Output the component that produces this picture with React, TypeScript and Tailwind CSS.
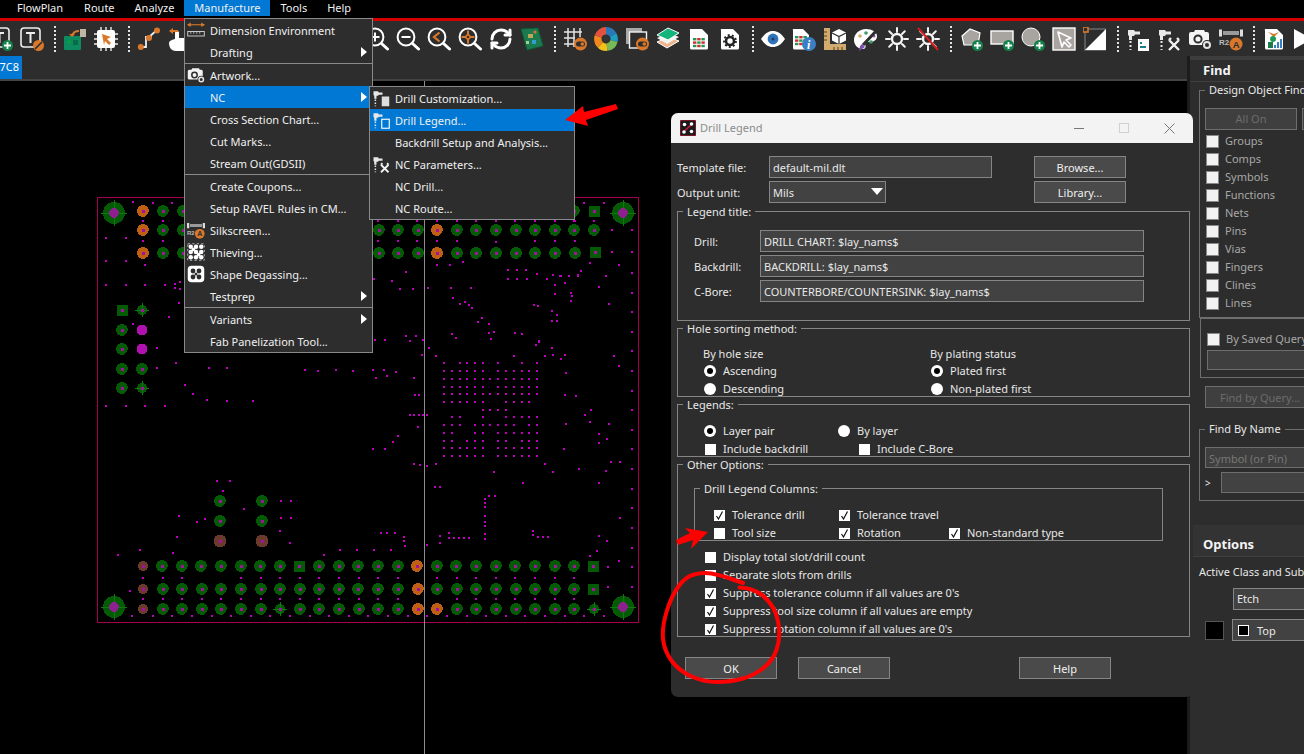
import React from "react";
import { RefreshCw } from "lucide-react";

const FONT = "font-['Noto_Sans',_'Open_Sans',_sans-serif]";

// ---- toolbar / menu icons ----
const Ic = ({ size = 24, children }: { size?: number; children: React.ReactNode }) => (
  <svg width={size} height={size} viewBox="0 0 24 24" className="shrink-0">
    {children}
  </svg>
);

const PlusBadge = () => (
  <g>
    <circle cx="18.5" cy="18.5" r="5.5" fill="#14804a" />
    <path d="M18.5 15v7M15 18.5h7" stroke="#fff" strokeWidth="1.8" />
  </g>
);

const Doc = ({ x = 3, w = 18 }: { x?: number; w?: number }) => (
  <path d={`M${x} 2h${w - 6}l6 6v13a1.5 1.5 0 0 1-1.5 1.5h-${w - 3}a1.5 1.5 0 0 1-1.5-1.5V3.5A1.5 1.5 0 0 1 ${x} 2z`} fill="#fff" />
);

const Cells = ({ x = 6, y = 11 }: { x?: number; y?: number }) => (
  <g>
    {[0, 1, 2].map((r) =>
      [0, 1, 2].map((c) => (
        <rect key={`${r}${c}`} x={x + c * 4.2} y={y + r * 3.4} width="3.4" height="2.4" fill={(r + c) % 2 ? "#d92b2b" : "#1f9a55"} />
      ))
    )}
  </g>
);

const Drill = () => (
  <g>
    <path d="M2 3h6l1 1.5h5v3H9L8 9H6v4H3V9L2 8z" fill="#e8e8e8" />
    <path d="M4.5 14v2M4.5 18v2M4.5 22v1" stroke="#e8e8e8" strokeWidth="2" />
  </g>
);

const Wrench = () => (
  <path d="M12 13l10 10M22 13l-10 10M12 13l2-2M22 13l-2-2" stroke="#f2f2f2" strokeWidth="2.4" fill="none" />
);

const Camera = () => (
  <g>
    <path d="M1 7a2 2 0 0 1 2-2h3l1-2h9l1 2h2a2 2 0 0 1 2 2v11H3a2 2 0 0 1-2-2z" fill="#f4f4f4" />
    <circle cx="10" cy="12" r="3.6" fill="#f4f4f4" stroke="#2d2d2d" strokeWidth="2" />
    <circle cx="19" cy="18" r="5" fill="#2d2d2d" />
    <circle cx="19" cy="18" r="3" fill="none" stroke="#e4e4e4" strokeWidth="2" />
  </g>
);

const R2A = () => (
  <g>
    <rect x="4" y="4" width="16" height="4" fill="#9a9a9a" />
    <path d="M1.5 2.5v7M22.5 2.5v7" stroke="#ddd" strokeWidth="3" />
    <text x="0" y="18" fontSize="8" fontWeight="700" fill="#bbb" fontFamily="Liberation Sans">R2</text>
    <circle cx="17" cy="17" r="6.5" fill="#d9782b" />
    <text x="13.8" y="20.5" fontSize="9.5" fontWeight="700" fill="#2d2d2d" fontFamily="Liberation Sans">A</text>
  </g>
);

const Magnifier = ({ children }: { children?: React.ReactNode }) => (
  <g>
    <circle cx="10" cy="10" r="8.4" fill="none" stroke="#fff" strokeWidth="2" />
    <path d="M16.5 16.5l6 5.5" stroke="#fff" strokeWidth="3" strokeLinecap="round" />
    {children}
  </g>
);

const Sun = () => (
  <g fill="none" stroke="#f4f4f4">
    <circle cx="12" cy="12" r="5" strokeWidth="2.4" />
    <path d="M12 1v4M12 19v4M1 12h4M19 12h4M4.2 4.2l2.8 2.8M17 17l2.8 2.8M19.8 4.2L17 7M7 17l-2.8 2.8" strokeWidth="2" strokeLinecap="round" />
  </g>
);

const Toggle = () => (
  <g>
    <circle cx="17.5" cy="17" r="6.5" fill="#d9782b" />
    <rect x="13" y="14.5" width="9" height="5" rx="2.5" fill="#2d2d2d" />
    <circle cx="19.3" cy="17" r="1.8" fill="#d9782b" />
  </g>
);

const wheel = [
  { c: "#2b78b8", o: 0, l: 17 },
  { c: "#1f9ec2", o: 17, l: 12 },
  { c: "#79b956", o: 29, l: 19 },
  { c: "#f2c21a", o: 48, l: 14 },
  { c: "#f0881e", o: 62, l: 18 },
  { c: "#e6503f", o: 80, l: 20 },
];

const toolbarIcons: React.ReactNode[] = [
  <Ic key="t1"><rect x="1" y="1" width="19" height="19" rx="3" fill="none" stroke="#eee" strokeWidth="1.6" /><path d="M6 6h9M10.5 6v10" stroke="#eee" strokeWidth="2" /><PlusBadge /></Ic>,
  <Ic key="t2"><rect x="1" y="1" width="19" height="19" rx="3" fill="none" stroke="#eee" strokeWidth="1.6" /><path d="M6 6h9M10.5 6v10" stroke="#eee" strokeWidth="2" /><circle cx="18.5" cy="18.5" r="5.5" fill="#d9782b" /><path d="M15 22l7-7" stroke="#2d2d2d" strokeWidth="1.6" /></Ic>,
  "sep",
  <Ic key="b1"><rect x="1" y="9" width="17" height="14" rx="1" fill="#0e8a5f" /><circle cx="6" cy="15" r="1.4" fill="#0a3" /><rect x="10" y="13" width="5" height="5" fill="#086b49" /><rect x="17" y="2" width="6" height="8" fill="#bdb7a8" /><path d="M16 4c-4 0-6 1-7 5" stroke="#d9782b" strokeWidth="2" fill="none" /><path d="M6 7l3 3 3-3" fill="#d9782b" /></Ic>,
  <Ic key="b2"><path d="M7 0v24M12 0v24M17 0v24M0 7h24M0 12h24M0 17h24" stroke="#eee" strokeWidth="1.4" /><rect x="3" y="3" width="18" height="18" rx="2" fill="#fff" /><path d="M8 7l9 3-4 2 4 4-2 2-4-4-1 4z" fill="#d9782b" /></Ic>,
  "sep",
  <Ic key="r1"><path d="M4 20h5V10h6" stroke="#eee" strokeWidth="1.8" fill="none" /><path d="M12 10l8-7" stroke="#eee" strokeWidth="1.8" /><circle cx="3.8" cy="20" r="3" fill="#d9782b" /><circle cx="12" cy="11" r="3" fill="#d9782b" /><circle cx="20" cy="3.5" r="3" fill="#d9782b" /></Ic>,
  <Ic key="r2"><path d="M8 24c-4 0-7-3-7-8 0-2 2-3 6-4V6c0-3 4-3 4 0v5h6v13z" fill="#fff" /><path d="M1 4l4-3v2h5v2H5v2z" fill="#d9782b" /></Ic>,
  <div key="gap" className="w-[159px] shrink-0" />,
  <Ic key="z1"><Magnifier><path d="M5.5 10h9M10 5.5v9" stroke="#fff" strokeWidth="2" /></Magnifier></Ic>,
  <Ic key="z2"><Magnifier><path d="M5.5 10h9" stroke="#fff" strokeWidth="2" /></Magnifier></Ic>,
  <Ic key="z3"><Magnifier><path d="M12.5 5.5L7 10l5.5 4.5" stroke="#d9782b" strokeWidth="2.2" fill="none" /></Magnifier></Ic>,
  <Ic key="z4"><Magnifier><path d="M10 3.5v13M3.5 10h13" stroke="#d9782b" strokeWidth="2" /><circle cx="10" cy="10" r="2" fill="#2d2d2d" stroke="#d9782b" strokeWidth="1.4" /></Magnifier></Ic>,
  <RefreshCw key="z5" size={24} strokeWidth={3} color="#fff" className="shrink-0" />,
  <Ic key="z6"><path d="M1 2l17-1 5 18-16 4z" fill="#1c7a4e" stroke="#0f5a37" /><rect x="8" y="7" width="5" height="4" fill="#b9a85a" /><rect x="12" y="13" width="4" height="4" fill="#2f9fd0" /><rect x="6" y="14" width="3" height="3" fill="#9fd08a" /><circle cx="15" cy="5" r="1.6" fill="#d9782b" /></Ic>,
  "sep",
  <Ic key="g1"><path d="M5 1v19M11 1v19M17 1v9M1 5h18M1 11h11M1 17h11" stroke="#e4e4e4" strokeWidth="1.5" /><Toggle /></Ic>,
  <Ic key="g2"><g transform="rotate(-90 12 12)">{wheel.map((s) => (<circle key={s.c} cx="12" cy="12" r="8.2" fill="none" stroke={s.c} strokeWidth="7.4" pathLength={100} strokeDasharray={`${s.l} ${100 - s.l}`} strokeDashoffset={-s.o} />))}</g><circle cx="12" cy="12" r="3.6" fill="#333" /></Ic>,
  <Ic key="g3"><rect x="1" y="1" width="16" height="16" fill="#a8a8a8" /><rect x="4.5" y="5" width="17" height="16" fill="#2d2d2d" stroke="#f2f2f2" strokeWidth="1.4" /><Toggle /></Ic>,
  <Ic key="g4"><path d="M1 15l12-5 10 4-12 7z" fill="#efb48a" stroke="#fff" /><path d="M1 11l12-5 10 4-12 7z" fill="#f4f4f4" /><path d="M1 8l11-7 11 5-11 7z" fill="#12b57a" stroke="#fff" /></Ic>,
  <Ic key="g5"><Doc /><Cells /></Ic>,
  <Ic key="g6"><Doc /><circle cx="12" cy="14" r="4" fill="none" stroke="#222" strokeWidth="2.6" /><circle cx="12" cy="14" r="6" fill="none" stroke="#222" strokeWidth="1.8" strokeDasharray="2 2.2" /></Ic>,
  "sep",
  <Ic key="v1"><path d="M0 12c4-6 8-8 12-8s8 2 12 8c-4 6-8 8-12 8s-8-2-12-8z" fill="#fff" /><circle cx="12" cy="12" r="5.4" fill="#2f74b8" /><circle cx="12" cy="12" r="1.6" fill="#1b3f6a" /></Ic>,
  <Ic key="v2"><Doc x={1} w={16} /><Cells x={3} y={9} /><circle cx="17" cy="17" r="7" fill="#3a7fc4" /><text x="15" y="21.5" fontSize="12" fontStyle="italic" fontWeight="700" fill="#fff" fontFamily="Liberation Serif">i</text></Ic>,
  <Ic key="v3"><path d="M1 1h6v16h16v6H1z" fill="#d4ab6e" /><path d="M1 5h3M1 9h3M1 13h3M11 23v-3M15 23v-3M19 23v-3" stroke="#5a4020" strokeWidth="1" /><path d="M16 2l7 3.5v8L16 17l-7-3.5v-8z" fill="#fff" /><path d="M9 6l7 3.5L23 6M16 9.500V17" stroke="#2d2d2d" strokeWidth="1.2" fill="none" /></Ic>,
  <Ic key="v4"><path d="M12 2C5 2 0 7 0 13c0 5 4 9 9 9 3 0 3-3 2-5 0-2 2-2 4-2 5 0 8-2 8-6 0-4-5-7-11-7z" fill="#fff" /><circle cx="12" cy="6" r="1.8" fill="#3d9a6a" /><circle cx="6" cy="9" r="1.8" fill="#d4ab6e" /><circle cx="17" cy="15" r="1.8" fill="#3d9a6a" /><circle cx="20" cy="9" r="1.5" fill="#9560b8" /><path d="M24 2L9 18" stroke="#2d2d2d" strokeWidth="3" /><path d="M8 17l3 3-6 4 1-5z" fill="#7b4fb0" /></Ic>,
  <Ic key="v5"><Sun /></Ic>,
  <Ic key="v6"><Sun /><path d="M2 1l20 22" stroke="#d41c1c" strokeWidth="2" /></Ic>,
  "sep",
  <Ic key="d1"><path d="M3 9l8-7 10 4-2 12H5z" fill="#a8a4a0" stroke="#fff" strokeWidth="1.2" /><PlusBadge /></Ic>,
  <Ic key="d2"><rect x="1" y="4" width="22" height="13" fill="#a8a4a0" stroke="#fff" strokeWidth="1.4" /><PlusBadge /></Ic>,
  <Ic key="d3"><circle cx="10" cy="10" r="9" fill="#a8a4a0" stroke="#fff" strokeWidth="1" /><PlusBadge /></Ic>,
  <Ic key="d4"><rect x="1" y="1" width="22" height="22" fill="#a8a4a0" stroke="#fff" strokeWidth="1.4" /><path d="M6 5l13 6-5 2 5 5-2 2-5-5-2 5z" fill="#a8a4a0" stroke="#fff" strokeWidth="1.6" strokeLinejoin="round" /></Ic>,
  <Ic key="d5"><rect x="2" y="2" width="20" height="21" fill="none" stroke="#666" strokeWidth="1.6" /><path d="M23 2v21H2z" fill="#fff" /><rect x="0" y="0" width="5" height="5" fill="#2d2d2d" stroke="#d9782b" strokeWidth="1.6" /></Ic>,
  "sep",
  <Ic key="n1"><Drill /><rect x="12" y="12" width="11" height="12" fill="#fff" /><rect x="14" y="15" width="2" height="2" fill="#1c7a8a" /><rect x="14" y="19" width="6" height="2" fill="#1c7a8a" /></Ic>,
  <Ic key="n2"><Drill /><Wrench /></Ic>,
  <Ic key="n3"><Camera /></Ic>,
  <Ic key="n4"><R2A /></Ic>,
  "sep",
  <Ic key="p1"><Doc /><path d="M6 5l6 2 5-2-5 5z" fill="#d9782b" /><circle cx="11" cy="12" r="3" fill="#1f9a55" /><rect x="6" y="15" width="5" height="6" fill="#1f7a4a" /><path d="M13 21v-3M16 21v-6M19 21v-9" stroke="#3a7fc4" strokeWidth="2" /></Ic>,
  <Ic key="p2"><path d="M1 2l18 10L1 22z" fill="#fff" /><path d="M14 20l4-4 3 3" stroke="#d9782b" strokeWidth="2" fill="none" /></Ic>,
];

// ---- board drawing data (screen coordinates) ----
type P = [number, number];
const row = (y: number, xs: number[]): P[] => xs.map((x) => [x, y]);
const zoomed = (ox: number, oy: number, pts: number[][]): P[] => pts.map(([x, y]) => [ox + x / 3, oy + y / 3]);

const greenPads: P[] = [
  ...row(211, [163, 183, 574]),
  ...row(230, [163, 183, 379, 398, 418, 457, 476, 496, 516, 535, 555, 574, 594]),
  ...row(253, [163, 183, 379, 398, 418, 457, 476, 496, 516, 535, 555, 575]),
  ...row(330, [122]), ...row(349, [122]), ...row(369, [122, 142]), ...row(388, [122]),
  ...row(501, [220, 262]), ...row(521, [220, 262]),
  ...row(566, [162, 182, 201, 221, 241, 260, 280, 319, 339, 358, 378, 398, 437, 456, 476, 496, 515, 535, 555, 574]),
  ...row(589, [163, 182, 202, 221, 241, 261, 280, 300, 319, 339, 358, 378, 398, 437, 457, 476, 496, 516, 535, 555, 574]),
  ...row(609, [163, 182, 202, 221, 241, 261, 300, 319, 339, 359, 378, 398, 457, 476, 496, 516, 535, 555, 574]),
];
const orangePads: P[] = [...row(211, [143]), ...row(230, [143, 437]), ...row(253, [143, 437]), ...row(566, [417]), ...row(589, [418]), ...row(609, [418, 437])];
const brownPads: P[] = [...row(541, [220, 262]), ...row(566, [143]), ...row(589, [143]), ...row(609, [143])];
const squarePads: P[] = [[594, 211], [595, 252], [122, 310], [299, 566], [593, 566], [593, 589]];
const crossPads: P[] = [[142, 310], [142, 388], [280, 609], [594, 609]];
const magentaPads: P[] = [[142, 330], [142, 349]];
const bigPads: P[] = [[114, 213], [623, 213], [114, 607], [623, 607]];

const bgaX = [444, 452, 460, 467, 475, 483, 490, 498, 506, 514, 522, 529, 537];
const bgaY = [363, 371, 379, 387, 394, 402, 410, 417, 425, 433, 441, 448, 456];
const bgaRows = [
  "1011110100101", "1111110111111", "1111111111111", "1111110111111", "1111111111111", "1111110011110", "0000011110000",
  "0110010011111", "1110111111011", "1100110111111", "1101110110111", "1111110111111", "1111110111111",
];
const bga: P[] = bgaRows.flatMap((r, j) => r.split("").flatMap((c, i): P[] => (c === "1" ? [[bgaX[i], bgaY[j]]] : [])));

const dots: P[] = [
  ...bga,
  ...zoomed(370, 340, [
    [15, 0], [45, 0], [120, 3], [159, 0], [177, 24], [156, 45], [198, 48], [432, 48], [507, 6], [498, 15], [546, 24], [525, 48], [549, 45], [585, 45], [573, 57], [732, 48], [747, 78],
    [786, 33], [786, 93], [786, 153], [786, 210], [786, 270], [786, 327], [786, 387], [786, 447], [786, 504], [786, 564], [786, 624], [786, 681], [786, 741],
    [588, 99], [585, 165], [618, 168], [663, 210], [645, 225], [660, 246], [588, 252], [717, 252], [687, 282], [711, 297], [687, 309], [582, 327], [723, 366], [750, 366], [708, 393], [687, 429], [750, 534], [627, 387], [525, 372], [549, 396], [459, 429], [372, 396],
    [9, 90], [42, 90], [51, 108], [78, 96], [18, 114], [132, 114], [135, 165], [147, 165], [120, 225], [132, 225], [147, 225], [159, 225], [171, 225], [144, 261], [84, 288], [69, 306], [9, 327], [45, 327], [132, 372], [150, 375], [171, 378], [198, 372], [195, 441], [210, 441],
    [345, 477], [357, 468], [375, 468], [345, 489], [345, 501], [345, 528], [345, 546], [345, 558], [345, 582], [345, 597], [489, 573], [489, 585], [504, 591], [519, 591], [534, 591],
    [237, 579], [210, 588], [237, 594], [252, 594], [267, 594], [282, 594], [297, 594], [210, 609], [171, 615], [33, 579], [51, 579], [75, 579], [102, 591], [102, 603], [105, 618], [12, 630], [63, 630], [687, 588], [711, 603], [681, 633], [660, 648], [747, 663], [714, 681], [714, 741],
    ...[24, 84, 201, 261, 318, 378, 435, 495, 555, 612].map((x) => [x, 714]),
    ...[24, 84, 261, 318, 378, 435, 495, 555, 612].map((x) => [x, 777]),
    ...[54, 114, 171, 231, 291, 348, 408, 465, 525, 585, 642, 702].map((x) => [x, 828]),
  ]),
  ...zoomed(90, 190, [
    [129, 36], [189, 39], [246, 39], [159, 93], [219, 93], [48, 144], [108, 144], [159, 153], [219, 153], [48, 213], [108, 213], [165, 225], [48, 285], [108, 285], [165, 285], [225, 285], [255, 282], [255, 294], [270, 276], [270, 297], [267, 339], [237, 381], [129, 402], [201, 474], [201, 534], [258, 519], [357, 534], [411, 534], [285, 585], [309, 612], [351, 630], [411, 633], [489, 633], [48, 648], [108, 648], [165, 648], [225, 648], [645, 540], [684, 543], [738, 540], [789, 543], [849, 540], [882, 540], [858, 564], [891, 558], [855, 450], [885, 450], [852, 267], [864, 93], [864, 153],
  ]),
  ...zoomed(90, 470, [
    [381, 33], [420, 33], [399, 63], [573, 93], [603, 93], [462, 117], [267, 138], [345, 147], [321, 156], [573, 144], [603, 144], [570, 183], [261, 201], [600, 219], [873, 189], [891, 189], [84, 255], [150, 240], [249, 249], [702, 255], [750, 240], [801, 240], [852, 240], [120, 363],
    ...[159, 219, 276, 453, 513, 570, 630, 687, 747, 807, 864].map((x) => [x, 324]),
    ...[159, 219, 276, 336, 393, 453, 513, 570, 630, 687, 747, 807, 864].map((x) => [x, 387]),
    ...[126, 189, 246, 306, 366, 423, 483, 540, 600, 660, 717, 777, 834, 894].map((x) => [x, 438]),
  ]),
  ...zoomed(180, 60, [
    [595, 482], [654, 482], [711, 482], [771, 482], [831, 482], [888, 482], [948, 482], [1005, 482], [1065, 482], [1125, 482], [1185, 482], [595, 543], [654, 543], [711, 543], [771, 543], [831, 543], [948, 546], [1065, 543], [1125, 543], [1185, 543],
    [771, 615], [810, 615], [849, 606], [678, 636], [582, 657], [636, 663], [660, 687], [699, 687], [744, 684], [813, 684], [873, 684], [984, 630], [1011, 630], [1038, 630], [1071, 642], [1119, 645], [1140, 648], [1167, 648], [1194, 645], [984, 657], [1011, 657], [1041, 657], [1101, 657], [1155, 669], [1125, 675], [1125, 702], [1173, 699], [1173, 723], [819, 714], [840, 732], [855, 726], [867, 735], [876, 744], [1062, 735], [1074, 738], [1116, 753], [1131, 765], [1116, 783], [1131, 783], [906, 774], [894, 786], [927, 792], [816, 822], [828, 834], [927, 819], [942, 816], [933, 837], [1005, 819], [1026, 822], [1077, 843], [1068, 855], [678, 828], [708, 828], [690, 843], [729, 840], [585, 840], [615, 840], [747, 864], [726, 885], [768, 888], [1002, 888], [1116, 864], [1095, 888], [1119, 885], [1155, 885], [1143, 897],
  ]),
  [584, 203], [604, 203], [574, 221], [594, 221], [612, 230], [632, 230], [612, 252], [632, 252], [590, 263], [619, 265], [581, 271], [632, 273], [561, 276], [569, 276], [578, 276], [606, 276], [565, 283], [599, 287], [632, 293], [572, 296], [571, 301], [609, 304], [632, 312], [632, 332],
];

const Drillhole = ({ p, c = "#a3129f" }: { p: P; c?: string }) => <rect x={p[0] - 1.5} y={p[1] - 1.5} width="3" height="3" fill={c} />;

const Board = () => (
  <svg viewBox="0 81 1187 673" className="absolute inset-0 h-full w-full" shapeRendering="crispEdges">
    <rect x="97.500" y="197.500" width="540.500" height="424.500" fill="none" stroke="#a5004f" />
    {dots.map((p, i) => (
      <rect key={i} x={Math.round(p[0]) - 1} y={Math.round(p[1]) - 1} width="2" height="2" fill="#c000c0" />
    ))}
    {greenPads.map((p, i) => (
      <g key={i}><circle cx={p[0]} cy={p[1]} r="5.800" fill="#055a05" /><Drillhole p={p} /></g>
    ))}
    {orangePads.map((p, i) => (
      <g key={i}><circle cx={p[0]} cy={p[1]} r="5.800" fill="#bf5f14" /><Drillhole p={p} /></g>
    ))}
    {brownPads.map((p, i) => (
      <g key={i}><circle cx={p[0]} cy={p[1]} r={p[1] < 550 ? 6.5 : 5} fill="#6a3b2c" /><Drillhole p={p} /></g>
    ))}
    {squarePads.map((p, i) => (
      <g key={i}><rect x={p[0] - 5.500} y={p[1] - 5.500} width="11" height="11" fill="#055a05" /><Drillhole p={p} /></g>
    ))}
    {crossPads.map((p, i) => (
      <g key={i}><circle cx={p[0]} cy={p[1]} r="5" fill="#055a05" /><path d={`M${p[0] - 7} ${p[1]}h14M${p[0]} ${p[1] - 7}v14`} stroke="#0d7a0d" /><Drillhole p={p} /></g>
    ))}
    {magentaPads.map((p, i) => (
      <circle key={i} cx={p[0]} cy={p[1]} r="5.500" fill="#b010b0" />
    ))}
    {bigPads.map((p, i) => (
      <g key={i}><circle cx={p[0]} cy={p[1]} r="11" fill="#055a05" /><path d={`M${p[0] - 13} ${p[1]}h26M${p[0]} ${p[1] - 13}v26`} stroke="#0d7a0d" /><circle cx={p[0]} cy={p[1]} r="4.800" fill="#8e1f8e" /></g>
    ))}
    <path d="M424.500 81V754" stroke="#8c8c8c" />
  </svg>
);

// ---- menus ----
const TRI = () => <span className="absolute right-[5px] top-[6px] h-0 w-0 border-y-[5px] border-l-[6px] border-y-transparent border-l-white" />;

const MenuRow = ({ label, icon, active, arrow }: { label: string; icon?: React.ReactNode; active?: boolean; arrow?: boolean }) => (
  <div className={`relative flex h-[22px] items-center pl-[25px] pt-[2px] text-[11px] text-[#f0f0f0] ${active ? "bg-[#0078d4]" : ""}`}>
    {icon && <span className="absolute left-[2px] top-[2px]">{icon}</span>}
    {label}
    {arrow && <TRI />}
  </div>
);

const MenuSep = () => <div className="h-px bg-[#8a8a8a]" />;

const checker = (
  <Ic size={18}>
    <rect x="1" y="1" width="22" height="22" fill="none" stroke="#ddd" strokeDasharray="3 3" />
    {[5, 12, 19].flatMap((x) => [5, 12, 19].map((y) => <circle key={`${x}${y}`} cx={x} cy={y} r="3" fill="#fff" />))}
    <circle cx="8.500" cy="8.500" r="2.500" fill="#fff" /><circle cx="15.500" cy="15.500" r="2.500" fill="#fff" />
  </Ic>
);

const degas = (
  <Ic size={18}>
    <rect x="1" y="1" width="22" height="22" rx="5" fill="#fff" />
    {[8, 16].flatMap((x) => [8, 16].map((y) => <circle key={`${x}${y}`} cx={x} cy={y} r="3.200" fill="#2d2d2d" />))}
    <circle cx="12" cy="12" r="2" fill="#2d2d2d" />
  </Ic>
);

const dimension = (
  <Ic size={18}>
    <path d="M1 5h22" stroke="#d9782b" strokeWidth="1.400" /><path d="M0 5l5-3v6zM24 5l-5-3v6z" fill="#d9782b" />
    <rect x="1" y="14" width="22" height="6" fill="none" stroke="#d8d8d8" strokeWidth="1.200" />
    <path d="M5 14v3M9 14v3M13 14v3M17 14v3" stroke="#d8d8d8" />
  </Ic>
);

const ManufactureMenu = () => (
  <div className="absolute left-[184px] top-[18px] z-10 w-[189px] border border-[#8a8a8a] bg-[#2d2d2d]">
    <MenuRow label="Dimension Environment" icon={dimension} />
    <MenuRow label="Drafting" arrow />
    <MenuSep />
    <MenuRow label="Artwork..." icon={<Ic size={18}><Camera /></Ic>} />
    <MenuRow label="NC" active arrow />
    <MenuRow label="Cross Section Chart..." />
    <MenuRow label="Cut Marks..." />
    <MenuRow label="Stream Out(GDSII)" />
    <MenuSep />
    <MenuRow label="Create Coupons..." />
    <MenuRow label="Setup RAVEL Rules in CM..." />
    <MenuRow label="Silkscreen..." icon={<Ic size={18}><R2A /></Ic>} />
    <MenuRow label="Thieving..." icon={checker} />
    <MenuRow label="Shape Degassing..." icon={degas} />
    <MenuRow label="Testprep" arrow />
    <MenuSep />
    <MenuRow label="Variants" arrow />
    <MenuRow label="Fab Panelization Tool..." />
  </div>
);

const NcMenu = () => (
  <div className="absolute left-[369px] top-[86px] z-20 w-[206px] border border-[#8a8a8a] bg-[#2d2d2d]">
    <MenuRow label="Drill Customization..." icon={<Ic size={18}><Drill /><rect x="13" y="10" width="10" height="13" fill="#ddd" /></Ic>} />
    <MenuRow label="Drill Legend..." active icon={<Ic size={18}><Drill /><rect x="13" y="11" width="10" height="12" fill="#0078d4" stroke="#fff" strokeWidth="1.500" /></Ic>} />
    <MenuRow label="Backdrill Setup and Analysis..." />
    <MenuRow label="NC Parameters..." icon={<Ic size={18}><Drill /><Wrench /></Ic>} />
    <MenuRow label="NC Drill..." />
    <MenuRow label="NC Route..." />
  </div>
);

// ---- dialog controls ----
const Group = ({ title, className, children }: { title: string; className: string; children: React.ReactNode }) => (
  <div className={`relative border border-[#858585] ${className}`}>
    <span className="absolute -top-[8px] left-[5px] whitespace-nowrap bg-[#2d2d2d] px-[4px] text-[11px] leading-[16px] text-[#e8e8e8]">{title}</span>
    {children}
  </div>
);

const Field = ({ value, className }: { value: string; className: string }) => (
  <div className={`flex h-[22px] items-center border border-[#858585] bg-[#424242] pl-[3px] pt-[2px] text-[11px] text-[#e8e8e8] ${className}`}>{value}</div>
);

const Btn = ({ label, className = "" }: { label: string; className?: string }) => (
  <div className={`flex h-[22px] w-[92px] items-center justify-center border border-[#858585] bg-[#4a4a4a] pt-[2px] text-[11px] text-[#f0f0f0] ${className}`}>{label}</div>
);

const Radio = ({ label, on, className = "" }: { label: string; on?: boolean; className?: string }) => (
  <div className={`flex h-[18px] items-center gap-[7px] text-[11px] text-[#e8e8e8] ${className}`}>
    <span className="flex h-[12px] w-[12px] shrink-0 items-center justify-center rounded-full bg-white">
      {on && <span className="h-[6px] w-[6px] rounded-full bg-black" />}
    </span>
    {label}
  </div>
);

const Check = ({ label, on, className = "" }: { label: string; on?: boolean; className?: string }) => (
  <div className={`flex h-[18px] items-center gap-[7px] whitespace-nowrap text-[11px] text-[#e8e8e8] ${className}`}>
    <span className="flex h-[11px] w-[11px] shrink-0 items-center justify-center bg-white">
      {on && (
        <svg width="9" height="9" viewBox="0 0 9 9">
          <path d="M1.500 5L3.500 8L7.500 0.500" fill="none" stroke="#111" strokeWidth="1.200" />
        </svg>
      )}
    </span>
    {label}
  </div>
);

const DrillLegend = () => (
  <div className="absolute left-[671px] top-[113px] z-20 flex h-[584px] w-[522px] flex-col overflow-hidden rounded-[7px] bg-[#2d2d2d]">
    <div className="flex h-[30px] shrink-0 items-center bg-[#f3f3f3] pl-[9px] text-[11px] text-[#8b8b8b]">
      <svg width="16" height="16" viewBox="0 0 16 16" className="mr-[4px]">
        <rect width="16" height="16" rx="1.500" fill="#1b1b1b" stroke="#d1173a" />
        <path d="M4 11.500L12 4" stroke="#d1173a" strokeWidth="1.500" />
        <circle cx="4.500" cy="4.500" r="1.800" fill="#fff" /><circle cx="11.500" cy="4" r="1.800" fill="#fff" /><circle cx="4" cy="12" r="1.800" fill="#fff" /><circle cx="11.500" cy="11.500" r="1.800" fill="#fff" />
      </svg>
      Drill Legend
      <span className="ml-auto h-px w-[10px] bg-[#777]" />
      <span className="ml-[35px] h-[10px] w-[10px] border border-[#d0d0d0]" />
      <svg width="11" height="11" viewBox="0 0 11 11" className="ml-[35px] mr-[18px]">
        <path d="M0.500 0.500l10 10M10.500 0.500l-10 10" stroke="#777" />
      </svg>
    </div>
    <div className="flex flex-col pl-[6px] pr-[3px]">
      <div className="mt-[13px] flex items-center text-[11px] text-[#e8e8e8]">
        <span className="w-[92px] pt-[2px]">Template file:</span>
        <Field value="default-mil.dlt" className="w-[223px]" />
        <Btn label="Browse..." className="ml-[42px]" />
      </div>
      <div className="mt-[3px] flex items-center text-[11px] text-[#e8e8e8]">
        <span className="w-[92px] pt-[2px]">Output unit:</span>
        <div className="relative w-[117px]">
          <Field value="Mils" className="w-full" />
          <span className="absolute right-[3px] top-[7px] h-0 w-0 border-x-[6px] border-t-[7px] border-x-transparent border-t-white" />
        </div>
        <Btn label="Library..." className="ml-[148px]" />
      </div>

      <Group title="Legend title:" className="mt-[8px] h-[110px] pt-[18px]">
        {[
          ["Drill:", "DRILL CHART: $lay_nams$"],
          ["Backdrill:", "BACKDRILL: $lay_nams$"],
          ["C-Bore:", "COUNTERBORE/COUNTERSINK: $lay_nams$"],
        ].map(([l, v]) => (
          <div key={l} className="mb-[3px] flex items-center pl-[16px] text-[11px] text-[#e8e8e8]">
            <span className="w-[66px] pt-[2px]">{l}</span>
            <Field value={v} className="w-[384px]" />
          </div>
        ))}
      </Group>

      <Group title="Hole sorting method:" className="mt-[7px] h-[69px] pt-[16px]">
        <div className="flex text-[11px] text-[#e8e8e8]">
          <div className="ml-[25px] w-[227px]">
            <div className="h-[17px] leading-[18px]">By hole size</div>
            <Radio label="Ascending" on className="ml-[1px]" />
            <Radio label="Descending" className="ml-[1px]" />
          </div>
          <div>
            <div className="h-[17px] leading-[18px]">By plating status</div>
            <Radio label="Plated first" on className="ml-[1px]" />
            <Radio label="Non-plated first" className="ml-[1px]" />
          </div>
        </div>
      </Group>

      <Group title="Legends:" className="mt-[7px] h-[53px] pt-[17px]">
        <div className="ml-[26px] flex">
          <Radio label="Layer pair" on className="w-[134px]" />
          <Radio label="By layer" />
        </div>
        <div className="ml-[27px] flex">
          <Check label="Include backdrill" className="w-[154px]" />
          <Check label="Include C-Bore" />
        </div>
      </Group>

      <Group title="Other Options:" className="mt-[7px] h-[173px] pt-[23px]">
        <Group title="Drill Legend Columns:" className="ml-[16px] h-[53px] w-[469px] pt-[17px]">
          <div className="ml-[19px] flex">
            <Check label="Tolerance drill" on className="w-[125px]" />
            <Check label="Tolerance travel" on />
          </div>
          <div className="ml-[19px] flex">
            <Check label="Tool size" className="w-[125px]" />
            <Check label="Rotation" on className="w-[110px]" />
            <Check label="Non-standard type" on />
          </div>
        </Group>
        <div className="ml-[27px] mt-[7px]">
          <Check label="Display total slot/drill count" />
          <Check label="Separate slots from drills" />
          <Check label="Suppress tolerance column if all values are 0's" on />
          <Check label="Suppress tool size column if all values are empty" on />
          <Check label="Suppress rotation column if all values are 0's" on />
        </div>
      </Group>

      <div className="ml-[8px] mt-[20px] flex">
        <Btn label="OK" />
        <Btn label="Cancel" className="ml-[21px]" />
        <Btn label="Help" className="ml-[129px]" />
      </div>
    </div>
  </div>
);

// ---- right hand find / options panel ----
const findItems = ["Groups", "Comps", "Symbols", "Functions", "Nets", "Pins", "Vias", "Fingers", "Clines", "Lines"];

const PanelCheck = ({ label }: { label: string }) => (
  <div className="flex h-[18px] items-center gap-[6px] whitespace-nowrap text-[11px] text-[#a8a8a8]">
    <span className="h-[13px] w-[13px] shrink-0 border border-[#888] bg-[#f2f2f2]" />
    {label}
  </div>
);

const PanelBox = ({ title, className, children }: { title: string; className: string; children: React.ReactNode }) => (
  <div className={`relative w-[200px] border border-[#6e6e6e] ${className}`}>
    <span className="absolute -top-[9px] left-[5px] bg-[#2d2d2d] px-[4px] text-[11px] leading-[16px] text-[#e8e8e8]">{title}</span>
    {children}
  </div>
);

const RightPanel = () => (
  <div className="h-full w-[117px] shrink-0 overflow-hidden border-l-[3px] border-[#1c1c1c] bg-[#2d2d2d]">
    <div className="h-[4px] bg-[#3d3d3d]" />
    <div className="flex h-[22px] items-center border-b border-[#3f3f3f] pl-[13px] text-[13px] font-bold text-[#f4f4f4]">Find</div>
    <div className="w-[300px] pl-[9px]">
      <PanelBox title="Design Object Find Filter" className="mt-[8px] h-[228px] pt-[17px]">
        <div className="flex gap-[5px] pl-[5px]">
          <div className="flex h-[22px] w-[92px] items-center justify-center border border-[#6e6e6e] bg-[#3f3f3f] text-[11px] text-[#6c6c6c]">All On</div>
          <div className="h-[22px] w-[92px] border border-[#6e6e6e] bg-[#3f3f3f]" />
        </div>
        <div className="mt-[2px] pl-[6px]">
          {findItems.map((i) => (
            <PanelCheck key={i} label={i} />
          ))}
        </div>
      </PanelBox>
      <div className="ml-[1px] h-[60px] w-[200px] border border-[#6e6e6e] pl-[6px] pt-[11px]">
        <PanelCheck label="By Saved Query" />
        <div className="mt-[2px] h-[20px] w-[180px] border border-[#6e6e6e] bg-[#3f3f3f]" />
      </div>
      <div className="ml-[6px] mt-[8px] flex h-[22px] w-[110px] items-center justify-center border border-[#6e6e6e] bg-[#3f3f3f] pt-[2px] text-[11px] text-[#6c6c6c]">Find by Query...</div>
      <PanelBox title="Find By Name" className="mt-[21px] h-[72px] pl-[5px] pt-[17px]">
        <div className="flex h-[21px] w-[180px] items-center border border-[#6e6e6e] bg-[#3f3f3f] pl-[3px] pt-[3px] text-[11px] text-[#777]">Symbol (or Pin)</div>
        <div className="mt-[4px] flex items-center">
          <span className="w-[16px] pt-[2px] text-[10px] text-[#e8e8e8]">&gt;</span>
          <div className="h-[21px] w-[160px] border border-[#6e6e6e] bg-[#424242]" />
        </div>
      </PanelBox>
    </div>
    <div className="mt-[24px] flex h-[32px] items-center border-b border-[#3f3f3f] bg-[#333333] pl-[13px] pt-[9px] text-[13px] font-bold text-[#f4f4f4]">Options</div>
    <div className="w-[300px] pl-[9px]">
      <div className="mt-[6px] h-[18px] text-[11px] leading-[18px] text-[#e8e8e8]">Active Class and Subclass:</div>
      <div className="ml-[34px] mt-[7px] flex h-[22px] w-[120px] items-center border border-[#858585] bg-[#424242] pl-[3px] pt-[1px] text-[11px] text-[#e8e8e8]">Etch</div>
      <div className="mt-[9px] flex items-center">
        <span className="ml-[6px] h-[19px] w-[19px] border border-[#555] bg-black" />
        <div className="ml-[8px] flex h-[22px] w-[120px] items-center gap-[8px] border border-[#858585] bg-[#424242] pl-[5px] text-[11px] text-[#e8e8e8]">
          <span className="h-[11px] w-[11px] border border-white bg-black" />
          <span className="pt-[2px]">Top</span>
        </div>
      </div>
    </div>
  </div>
);

// ---- red annotations drawn over the screenshot ----
const loop: P[] = [[743, 583], [720, 575], [703, 572], [685, 577], [671, 597], [662, 627], [664, 650], [678, 670], [703, 682], [731, 682], [755, 675], [773, 660], [780, 640], [778, 617], [769, 600], [752, 588], [727, 587]];
const loopPath = loop.reduce((d, p, i) => {
  if (i === 0) return `M${p[0]} ${p[1]}`;
  const prev = loop[i - 1];
  return `${d} Q${prev[0]} ${prev[1]} ${(prev[0] + p[0]) / 2} ${(prev[1] + p[1]) / 2}`;
}, "");

const Annotations = () => (
  <svg viewBox="0 0 1304 754" className="pointer-events-none absolute inset-0 z-30 h-full w-full">
    <path d={loopPath} fill="none" stroke="#ff0000" strokeWidth="4" strokeLinecap="round" />
    <polygon points="565,120 583,106 584,112 616,104 618,109 586,120 588,126" fill="#ff0000" />
    <polygon points="708,532 685,528 690,533 676,540 678,545 693,540 691,549" fill="#ff0000" />
  </svg>
);

export default function App() {
  return (
    <div className={`relative flex h-[754px] w-[1304px] flex-col overflow-hidden bg-black ${FONT}`}>
      {/* menu bar */}
      <div className="flex h-[18px] shrink-0 items-start text-[11px] text-[#f0f0f0]">
        <div className="ml-[7px] flex h-[16px] items-center px-[10px]">FlowPlan</div>
        <div className="ml-[1px] flex h-[16px] items-center px-[10px]">Route</div>
        <div className="flex h-[16px] items-center px-[10px]">Analyze</div>
        <div className="flex h-[16px] w-[86px] items-center justify-center bg-[#0078d4]">Manufacture</div>
        <div className="flex h-[16px] items-center px-[10px]">Tools</div>
        <div className="flex h-[16px] items-center px-[10px]">Help</div>
      </div>
      <div className="h-[3px] shrink-0 bg-[#d40000]" />

      {/* toolbar */}
      <div className="flex h-[35px] shrink-0 items-center gap-[7px] bg-[#2d2d2d]">
        <div className="-ml-[11px] flex items-center gap-[7px]">
          {toolbarIcons.map((ic, i) =>
            ic === "sep" ? (
              <div key={i} className="ml-[3px] h-[26px] w-[2px] shrink-0 border-l-2 border-dotted border-[#e4e4e4]" />
            ) : (
              ic
            )
          )}
        </div>
      </div>

      <div className="flex min-h-0 flex-1">
        <div className="flex min-w-0 flex-1 flex-col">
          {/* tab row */}
          <div className="h-[23px] shrink-0 bg-[#2d2d2d]">
            <div className="flex h-[23px] w-[22px] items-center justify-end overflow-hidden bg-[#0078d4] pr-[3px] text-[11px] text-white">7C8</div>
          </div>
          <div className="h-[2px] shrink-0 bg-[#444]" />
          {/* board canvas */}
          <div className="relative flex-1 bg-black">
            <Board />
          </div>
        </div>
        <RightPanel />
      </div>

      <ManufactureMenu />
      <NcMenu />
      <DrillLegend />
      <Annotations />
    </div>
  );
}
